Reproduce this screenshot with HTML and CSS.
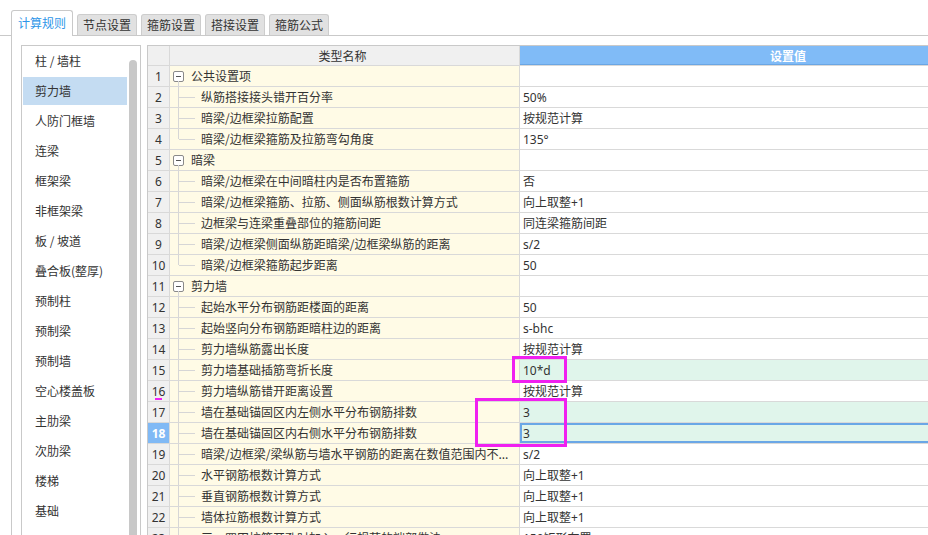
FILE: index.html
```html
<!DOCTYPE html>
<html lang="zh-CN">
<head>
<meta charset="utf-8">
<title>计算规则</title>
<link rel="stylesheet" href="styles.css">
</head>
<body>
<div class="tabs">
  <div class="tab active">计算规则</div>
  <div class="tab">节点设置</div>
  <div class="tab">箍筋设置</div>
  <div class="tab">搭接设置</div>
  <div class="tab">箍筋公式</div>
</div>
<div class="panel">
  <div class="list">
    <div class="items">
      <div class="item">柱 / 墙柱</div>
      <div class="item sel">剪力墙</div>
      <div class="item">人防门框墙</div>
      <div class="item">连梁</div>
      <div class="item">框架梁</div>
      <div class="item">非框架梁</div>
      <div class="item">板 / 坡道</div>
      <div class="item">叠合板(整厚)</div>
      <div class="item">预制柱</div>
      <div class="item">预制梁</div>
      <div class="item">预制墙</div>
      <div class="item">空心楼盖板</div>
      <div class="item">主肋梁</div>
      <div class="item">次肋梁</div>
      <div class="item">楼梯</div>
      <div class="item">基础</div>
    </div>
    <div class="scroll"></div>
  </div>
  <div class="grid">
    <div class="row head">
      <div class="num"></div>
      <div class="name">类型名称</div>
      <div class="val">设置值</div>
    </div>
    <div class="row"><div class="num">1</div><div class="name group"><span class="tog"></span>公共设置项</div><div class="val"></div></div>
    <div class="row"><div class="num">2</div><div class="name child">纵筋搭接接头错开百分率</div><div class="val">50%</div></div>
    <div class="row"><div class="num">3</div><div class="name child">暗梁/边框梁拉筋配置</div><div class="val">按规范计算</div></div>
    <div class="row"><div class="num">4</div><div class="name child last">暗梁/边框梁箍筋及拉筋弯勾角度</div><div class="val">135°</div></div>
    <div class="row"><div class="num">5</div><div class="name group"><span class="tog"></span>暗梁</div><div class="val"></div></div>
    <div class="row"><div class="num">6</div><div class="name child">暗梁/边框梁在中间暗柱内是否布置箍筋</div><div class="val">否</div></div>
    <div class="row"><div class="num">7</div><div class="name child">暗梁/边框梁箍筋、拉筋、侧面纵筋根数计算方式</div><div class="val">向上取整+1</div></div>
    <div class="row"><div class="num">8</div><div class="name child">边框梁与连梁重叠部位的箍筋间距</div><div class="val">同连梁箍筋间距</div></div>
    <div class="row"><div class="num">9</div><div class="name child">暗梁/边框梁侧面纵筋距暗梁/边框梁纵筋的距离</div><div class="val">s/2</div></div>
    <div class="row"><div class="num">10</div><div class="name child last">暗梁/边框梁箍筋起步距离</div><div class="val">50</div></div>
    <div class="row"><div class="num">11</div><div class="name group"><span class="tog"></span>剪力墙</div><div class="val"></div></div>
    <div class="row"><div class="num">12</div><div class="name child">起始水平分布钢筋距楼面的距离</div><div class="val">50</div></div>
    <div class="row"><div class="num">13</div><div class="name child">起始竖向分布钢筋距暗柱边的距离</div><div class="val">s-bhc</div></div>
    <div class="row"><div class="num">14</div><div class="name child">剪力墙纵筋露出长度</div><div class="val">按规范计算</div></div>
    <div class="row"><div class="num">15</div><div class="name child">剪力墙基础插筋弯折长度</div><div class="val edited">10*d</div></div>
    <div class="row"><div class="num">16</div><div class="name child">剪力墙纵筋错开距离设置</div><div class="val">按规范计算</div></div>
    <div class="row"><div class="num">17</div><div class="name child">墙在基础锚固区内左侧水平分布钢筋排数</div><div class="val edited">3</div></div>
    <div class="row"><div class="num cur">18</div><div class="name child">墙在基础锚固区内右侧水平分布钢筋排数</div><div class="val edited cur">3</div></div>
    <div class="row"><div class="num">19</div><div class="name child">暗梁/边框梁/梁纵筋与墙水平钢筋的距离在数值范围内不...</div><div class="val">s/2</div></div>
    <div class="row"><div class="num">20</div><div class="name child">水平钢筋根数计算方式</div><div class="val">向上取整+1</div></div>
    <div class="row"><div class="num">21</div><div class="name child">垂直钢筋根数计算方式</div><div class="val">向上取整+1</div></div>
    <div class="row"><div class="num">22</div><div class="name child">墙体拉筋根数计算方式</div><div class="val">向上取整+1</div></div>
    <div class="row"><div class="num">23</div><div class="name child">三一四田拉筋开孔时加入一行规范的端部做法</div><div class="val">150矩形布置</div></div>
  </div>
</div>
<div class="mark mark-a"></div>
<div class="mark mark-b"></div>
<div class="mark mark-c"></div>
</body>
</html>
```

FILE: styles.css
```css
html, body {
  margin: 0;
  padding: 0;
}
body {
  width: 928px;
  height: 535px;
  overflow: hidden;
  position: relative;
  background: #fff;
  color: #333;
  font-family: "Noto Sans CJK SC", "Noto Sans", sans-serif;
  font-size: 12px;
}

/* tabs */
.tabs {
  display: flex;
  align-items: flex-end;
  gap: 4px;
  height: 25px;
  padding: 10px 0 0 11px;
  border-bottom: 1px solid #c9c9c9;
}
.tab {
  height: 20px;
  line-height: 20px;
  padding: 0 5px;
  background: #e1e1e1;
  border: 1px solid #cdcdcd;
  border-bottom: none;
  border-radius: 3px 3px 0 0;
  color: #333;
  white-space: nowrap;
}
.tab.active {
  height: 25px;
  line-height: 24px;
  margin-bottom: -1px;
  padding: 0 6px;
  background: #fff;
  color: #2e96e8;
  border-color: #c9c9c9;
}

/* panel */
.panel {
  display: flex;
  gap: 6px;
  margin-left: 11px;
  padding: 9px 0 0 9px;
  border-left: 1px solid #c9c9c9;
  height: 520px;
}

.list {
  flex: none;
  display: flex;
  width: 118px;
  height: 520px;
  border: 1px solid #c9c9c9;
}
.items {
  width: 104px;
  padding: 1px 0 0 1px;
}
.item {
  height: 28px;
  line-height: 28px;
  margin-bottom: 2px;
  padding-left: 12px;
  white-space: nowrap;
}
.item.sel {
  background: #c4dcf2;
}
.scroll {
  width: 8px;
  margin: 14px 3px 0 2px;
  background: #c8c8c8;
  border-radius: 4px 4px 0 0;
}

/* grid */
.grid {
  flex: none;
  width: 910px;
  border-left: 1px solid #c9c9c9;
  border-top: 1px solid #c9c9c9;
}
.row {
  display: flex;
  height: 20px;
  line-height: 20px;
  border-bottom: 1px solid #d9d9d9;
}
.row.head {
  height: 19px;
  line-height: 19px;
}
.num {
  flex: none;
  width: 21px;
  border-right: 1px solid #d9d9d9;
  background: #f0f0f0;
  text-align: center;
  color: #333;
  font-family: "Noto Sans", "Noto Sans CJK SC", sans-serif;
  line-height: 21px;
}
.num.cur {
  background: #80b9f5;
  color: #fff;
  font-weight: bold;
}
.name {
  flex: none;
  position: relative;
  width: 350px;
  box-sizing: border-box;
  border-right: 1px solid #d9d9d9;
  background: #fffbe6;
  overflow: hidden;
  white-space: nowrap;
  padding-right: 4px;
}
.val {
  flex: none;
  width: 536px;
  box-sizing: border-box;
  padding-left: 3px;
  background: #fff;
  white-space: nowrap;
  font-family: "Noto Sans", "Noto Sans CJK SC", sans-serif;
  line-height: 21px;
}
.val.edited {
  background: #e0f5eb;
}
.val.cur {
  box-shadow: inset 0 0 0 2px #6aa7e6;
}

.head .num {
  line-height: 19px;
}
.head .name {
  background: #f0f0f0;
  text-align: center;
}
.head .val {
  background: #80bbf7;
  color: #fff;
  font-weight: bold;
  text-align: center;
  padding-left: 0;
  font-family: "Noto Sans CJK SC", sans-serif;
  line-height: 19px;
  box-shadow: inset 0 -1px 0 #6aa6e4;
}

/* tree */
.name.group {
  padding-left: 3px;
}
.tog {
  display: inline-block;
  position: relative;
  width: 9px;
  height: 9px;
  margin-right: 7px;
  border: 1px solid #8a8a8a;
  border-radius: 2px;
  background: #fff;
  vertical-align: -1px;
}
.tog::after {
  content: "";
  position: absolute;
  left: 2px;
  top: 4px;
  width: 5px;
  height: 1px;
  background: #555;
}
.name.group::after {
  content: "";
  position: absolute;
  left: 8px;
  top: 15px;
  bottom: 0;
  width: 1px;
  background: #d6d6d6;
}
.name.child {
  padding-left: 31px;
}
.name.child::before {
  content: "";
  position: absolute;
  left: 8px;
  top: 0;
  bottom: 0;
  width: 1px;
  background: #d6d6d6;
}
.name.child.last::before {
  bottom: 10px;
}
.name.child::after {
  content: "";
  position: absolute;
  left: 9px;
  top: 10px;
  width: 16px;
  height: 1px;
  background: #d6d6d6;
}

/* annotation marks */
.mark {
  position: absolute;
  box-sizing: border-box;
  border: 3px solid #f020f0;
}
.mark-a {
  left: 512px;
  top: 356px;
  width: 55px;
  height: 27px;
}
.mark-b {
  left: 475px;
  top: 398px;
  width: 92px;
  height: 49px;
}
.mark-c {
  left: 155px;
  top: 398px;
  width: 7px;
  height: 2px;
  border: none;
  background: #f020f0;
}
```
